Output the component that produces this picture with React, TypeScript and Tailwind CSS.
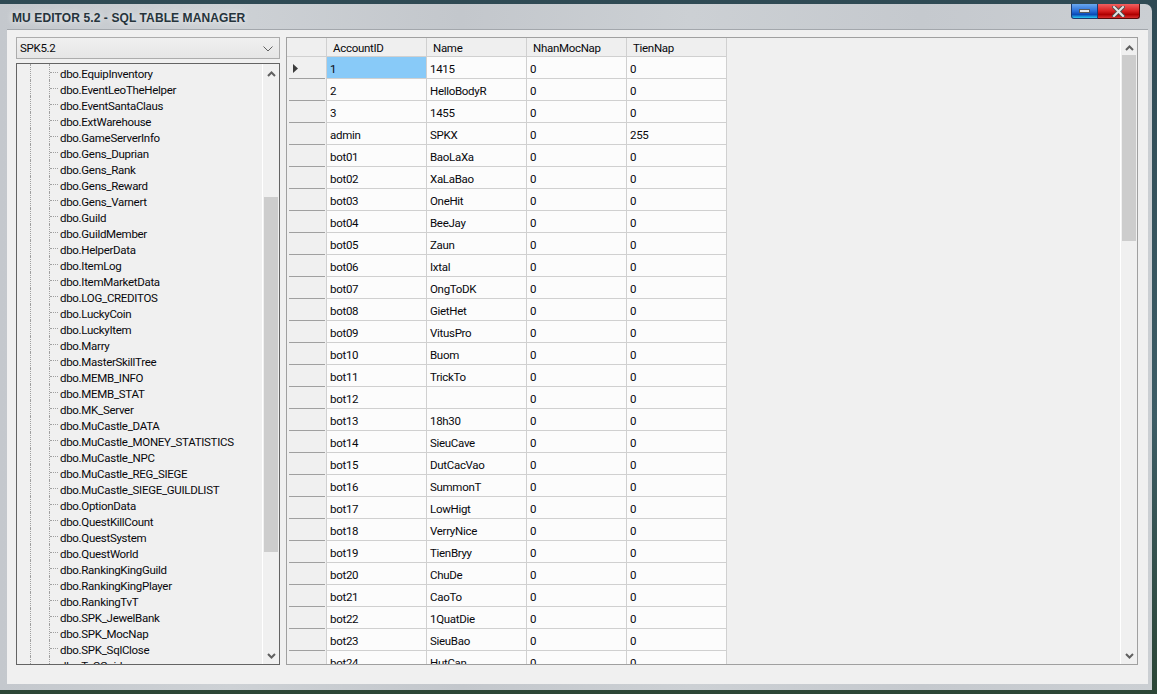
import React from "react";

const tables = [
  "dbo.EquipInventory",
  "dbo.EventLeoTheHelper",
  "dbo.EventSantaClaus",
  "dbo.ExtWarehouse",
  "dbo.GameServerInfo",
  "dbo.Gens_Duprian",
  "dbo.Gens_Rank",
  "dbo.Gens_Reward",
  "dbo.Gens_Varnert",
  "dbo.Guild",
  "dbo.GuildMember",
  "dbo.HelperData",
  "dbo.ItemLog",
  "dbo.ItemMarketData",
  "dbo.LOG_CREDITOS",
  "dbo.LuckyCoin",
  "dbo.LuckyItem",
  "dbo.Marry",
  "dbo.MasterSkillTree",
  "dbo.MEMB_INFO",
  "dbo.MEMB_STAT",
  "dbo.MK_Server",
  "dbo.MuCastle_DATA",
  "dbo.MuCastle_MONEY_STATISTICS",
  "dbo.MuCastle_NPC",
  "dbo.MuCastle_REG_SIEGE",
  "dbo.MuCastle_SIEGE_GUILDLIST",
  "dbo.OptionData",
  "dbo.QuestKillCount",
  "dbo.QuestSystem",
  "dbo.QuestWorld",
  "dbo.RankingKingGuild",
  "dbo.RankingKingPlayer",
  "dbo.RankingTvT",
  "dbo.SPK_JewelBank",
  "dbo.SPK_MocNap",
  "dbo.SPK_SqlClose",
  "dbo.T_CGuid",
];

const rows: [string, string, string, string][] = [
  ["1", "1415", "0", "0"],
  ["2", "HelloBodyR", "0", "0"],
  ["3", "1455", "0", "0"],
  ["admin", "SPKX", "0", "255"],
  ["bot01", "BaoLaXa", "0", "0"],
  ["bot02", "XaLaBao", "0", "0"],
  ["bot03", "OneHit", "0", "0"],
  ["bot04", "BeeJay", "0", "0"],
  ["bot05", "Zaun", "0", "0"],
  ["bot06", "Ixtal", "0", "0"],
  ["bot07", "OngToDK", "0", "0"],
  ["bot08", "GietHet", "0", "0"],
  ["bot09", "VitusPro", "0", "0"],
  ["bot10", "Buom", "0", "0"],
  ["bot11", "TrickTo", "0", "0"],
  ["bot12", "", "0", "0"],
  ["bot13", "18h30", "0", "0"],
  ["bot14", "SieuCave", "0", "0"],
  ["bot15", "DutCacVao", "0", "0"],
  ["bot16", "SummonT", "0", "0"],
  ["bot17", "LowHigt", "0", "0"],
  ["bot18", "VerryNice", "0", "0"],
  ["bot19", "TienBryy", "0", "0"],
  ["bot20", "ChuDe", "0", "0"],
  ["bot21", "CaoTo", "0", "0"],
  ["bot22", "1QuatDie", "0", "0"],
  ["bot23", "SieuBao", "0", "0"],
  ["bot24", "HutCan", "0", "0"],
];

const columns = ["AccountID", "Name", "NhanMocNap", "TienNap"];

function Chevron({ up }: { up?: boolean }) {
  return (
    <svg width="9" height="6" viewBox="0 0 9 6" className="block">
      <polyline
        points={up ? "1,5 4.5,1.5 8,5" : "1,1 4.5,4.5 8,1"}
        fill="none"
        stroke="#606060"
        strokeWidth="2"
      />
    </svg>
  );
}

function ScrollBar({
  thumbTop,
  thumbHeight,
}: {
  thumbTop: number;
  thumbHeight: number;
}) {
  return (
    <div className="relative w-[17px] border-l border-white bg-[#f0f0f0] flex-shrink-0">
      <div className="h-[19px] flex items-center justify-center">
        <Chevron up />
      </div>
      <div
        className="absolute left-[1px] right-[1px] bg-[#cdcdcd]"
        style={{ top: thumbTop, height: thumbHeight }}
      />
      <div className="absolute bottom-0 left-0 right-0 h-[17px] flex items-center justify-center">
        <Chevron />
      </div>
    </div>
  );
}

function TreePanel() {
  return (
    <div className="flex-1 min-h-0 border border-[#646464] bg-[#f0f0f0] flex overflow-hidden">
      <div className="flex-1 min-w-0 overflow-hidden">
        {tables.map((t) => (
          <div key={t} className="h-[16px] flex items-stretch">
            <div className="w-[13px] flex-shrink-0" />
            <div className="w-[19px] flex-shrink-0 border-l border-dotted border-[#a0a0a0]" />
            <div className="w-[10px] flex-shrink-0 border-l border-dotted border-[#a0a0a0] flex items-center">
              <div className="w-[8px] border-t border-dotted border-[#a0a0a0]" />
            </div>
            <div className="pl-[1px] pt-[2px] leading-[16px] whitespace-nowrap text-[#08080c]">{t}</div>
          </div>
        ))}
      </div>
      <ScrollBar thumbTop={133} thumbHeight={355} />
    </div>
  );
}

function Grid() {
  return (
    <div className="flex-1 border border-[#a0a0a0] bg-[#f0f0f0] flex overflow-hidden">
      <div className="flex-1 min-w-0 overflow-hidden">
        <div className="flex h-[19px]">
          <div className="w-[40px] border-r border-b border-[#d0d0d0] bg-[#efefef]" />
          {columns.map((c) => (
            <div
              key={c}
              className="w-[100px] border-r border-b border-[#d0d0d0] bg-[#efefef] pl-[6px] pt-[1px] leading-[18px] text-[#08080c]"
            >
              {c}
            </div>
          ))}
        </div>
        {rows.map((r, i) => (
          <div key={r[0]} className="flex h-[22px]">
            <div className="w-[40px] border-r border-[#d0d0d0] bg-[#f0f0f0] flex flex-col">
              <div className="flex-1 flex items-center pl-[6px] pt-[2px]">
                {i === 0 && (
                  <svg width="5" height="9" viewBox="0 0 5 9" className="block">
                    <polygon points="0,0 5,4.5 0,9" fill="#3c3c3c" />
                  </svg>
                )}
              </div>
              <div className="ml-[2px] mr-[1px] h-px bg-[#a0a0a0]" />
            </div>
            {r.map((v, j) => (
              <div
                key={j}
                className={`w-[100px] border-r border-b border-[#d0d0d0] pl-[3px] pt-[2px] leading-[20px] text-[#08080c] ${
                  i === 0 && j === 0 ? "bg-[#88caf8]" : "bg-[#fcfcfc]"
                }`}
              >
                {v}
              </div>
            ))}
          </div>
        ))}
      </div>
      <ScrollBar thumbTop={17} thumbHeight={186} />
    </div>
  );
}

export default function App() {
  return (
    <div
      className="w-[1157px] h-[694px] overflow-hidden pt-[4px] pr-[5px] pb-[4px] bg-[linear-gradient(180deg,#2f4a54_0%,#3d5d66_60%,#2c4636_100%)] text-[11.5px] tracking-[-0.3px]"
      style={{ fontFamily: 'Roboto, "Liberation Sans", sans-serif' }}
    >
      <div className="h-full rounded-tr-[7px] bg-[linear-gradient(90deg,#c4c8cd_0%,#cdd1d5_20%,#c3c7cc_40%,#ccd0d4_60%,#c5c9ce_80%,#cbcfd3_100%)] flex flex-col">
        {/* title bar */}
        <div className="h-[25px] flex items-start flex-shrink-0">
          <div
            className="pl-[12px] pt-[5px] text-[12px] font-bold tracking-[0.1px] text-[#26343c] [text-shadow:0_0_6px_rgba(255,255,255,0.9)]"
            style={{ fontFamily: '"Liberation Sans", Arial, sans-serif' }}
          >
            MU EDITOR 5.2 - SQL TABLE MANAGER
          </div>
          <div className="ml-auto mr-[12px] flex">
            <div className="w-[27px] h-[15px] rounded-bl-[3px] border border-[#1a3a70] border-t-0 bg-[linear-gradient(180deg,#6aa8ee_0%,#2a6fd8_50%,#0a4ab8_75%,#28c8f0_100%)] flex items-center justify-center">
              <div className="w-[11px] h-[4px] bg-[#e8e8e8] border border-[#5a5a5a]" />
            </div>
            <div className="w-[42px] h-[15px] rounded-br-[3px] border border-[#5a0a0a] border-t-0 border-l-0 bg-[linear-gradient(180deg,#f06060_0%,#d82020_50%,#b00000_75%,#d83030_100%)] flex items-center justify-center">
              <svg width="13" height="11" viewBox="0 0 13 11" className="block">
                <path d="M2 1 L11 10 M11 1 L2 10" stroke="#505050" strokeWidth="4" strokeLinecap="square" />
                <path d="M2 1 L11 10 M11 1 L2 10" stroke="#e4e4e4" strokeWidth="2" strokeLinecap="square" />
              </svg>
            </div>
          </div>
        </div>

        {/* client area */}
        <div className="flex-1 ml-[7px] mr-[4px] mb-[6px] border-t border-[#a3a7ac] bg-[#f0f0f0] flex gap-[6px] pt-[7px] pl-[9px] pr-[10px] pb-[19px] min-h-0">
          <div className="w-[264px] flex flex-col gap-[4px]">
            <div className="h-[22px] border border-[#acacac] bg-[linear-gradient(180deg,#f0f0f0,#e6e6e6)] flex items-center pl-[3px] pr-[6px] pt-[1px] text-[#08080c]">
              <span className="flex-1">SPK5.2</span>
              <svg width="10" height="6" viewBox="0 0 10 6" className="block">
                <polyline points="0.5,0.5 5,5 9.5,0.5" fill="none" stroke="#606060" strokeWidth="1" />
              </svg>
            </div>
            <TreePanel />
          </div>
          <Grid />
        </div>
      </div>
    </div>
  );
}
